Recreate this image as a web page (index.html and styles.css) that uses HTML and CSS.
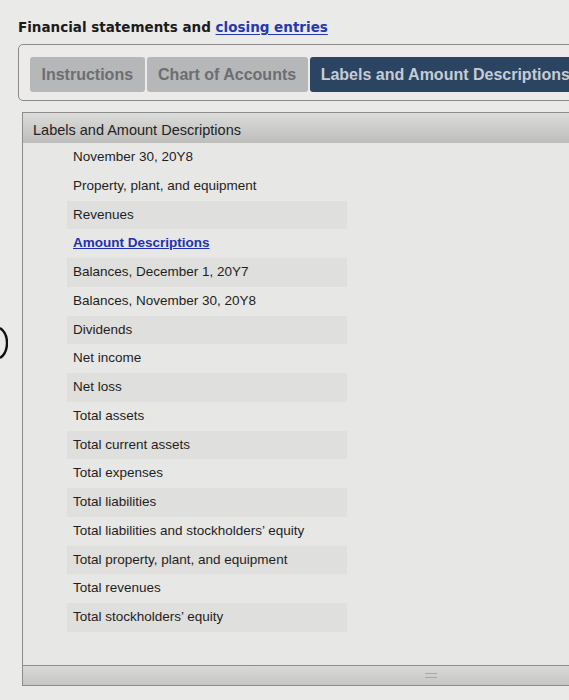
FILE: index.html
```html
<!DOCTYPE html>
<html>
<head>
<meta charset="utf-8">
<link rel="stylesheet" href="styles.css">
</head>
<body>
<div class="page">
  <h1 class="title">Financial statements and <a class="title-link" href="#">closing entries</a></h1>
  <div class="tabbar">
    <div class="tab">Instructions</div>
    <div class="tab">Chart of Accounts</div>
    <div class="tab tab-active">Labels and Amount Descriptions</div>
  </div>
  <div class="panel">
    <div class="panel-head">Labels and Amount Descriptions</div>
    <ul class="list">
      <li class="row">November 30, 20Y8</li>
      <li class="row">Property, plant, and equipment</li>
      <li class="row shade">Revenues</li>
      <li class="row"><a class="sub-link" href="#">Amount Descriptions</a></li>
      <li class="row shade">Balances, December 1, 20Y7</li>
      <li class="row">Balances, November 30, 20Y8</li>
      <li class="row shade">Dividends</li>
      <li class="row">Net income</li>
      <li class="row shade">Net loss</li>
      <li class="row">Total assets</li>
      <li class="row shade">Total current assets</li>
      <li class="row">Total expenses</li>
      <li class="row shade">Total liabilities</li>
      <li class="row">Total liabilities and stockholders’ equity</li>
      <li class="row shade">Total property, plant, and equipment</li>
      <li class="row">Total revenues</li>
      <li class="row shade">Total stockholders’ equity</li>
    </ul>
    <div class="panel-foot"><span class="grip"></span></div>
  </div>
  <svg class="edge-mark" width="8" height="34" viewBox="0 0 8 34"><path d="M0 2 C6 6 7 12 7 17 C7 22 6 28 0 32" fill="none" stroke="#111" stroke-width="2.4"/></svg>
</div>
</body>
</html>
```

FILE: styles.css
```css
html, body {
  margin: 0;
  padding: 0;
  overflow: hidden;
  background: #eaeae8;
}
.page {
  position: relative;
  width: 569px;
  height: 700px;
  overflow: hidden;
  padding-top: 18px;
  box-sizing: border-box;
}
.title {
  margin: 0 0 0 18px;
  font-family: "DejaVu Sans", Verdana, sans-serif;
  font-weight: bold;
  font-size: 13.5px;
  line-height: 18px;
  color: #1b1b1b;
  letter-spacing: 0;
}
.title-link {
  color: #2538b0;
  text-decoration: underline;
  text-underline-offset: 2px;
}
.tabbar {
  display: flex;
  gap: 2px;
  margin: 8px 0 0 18px;
  width: 580px;
  height: 57px;
  box-sizing: border-box;
  border: 1px solid #8a8a8a;
  border-radius: 5px;
  padding: 12px 0 0 11px;
  background: #ecebea;
}
.tab {
  height: 35px;
  line-height: 35px;
  padding: 0 11.5px;
  border-radius: 3px;
  background: #b6b7b9;
  color: #6c6e71;
  font-family: "Liberation Sans", Arial, sans-serif;
  font-weight: bold;
  font-size: 16px;
  white-space: nowrap;
}
.tab-active {
  background: #2a4461;
  color: #c6ccd4;
  padding-left: 11px;
}
.panel {
  margin: 11px 0 0 22px;
  width: 580px;
  height: 574px;
  box-sizing: border-box;
  border: 1px solid #8c8c8c;
  background: #e7e7e5;
  display: flex;
  flex-direction: column;
}
.panel-head {
  height: 30px;
  line-height: 34px;
  padding-left: 10px;
  background: linear-gradient(#dcdcda, #bdbdbb);
  font-family: "Liberation Sans", Arial, sans-serif;
  font-size: 14.5px;
  color: #222;
  flex: none;
}
.list {
  list-style: none;
  margin: 0;
  padding: 0 0 0 44px;
  flex: 1;
}
.row {
  width: 280px;
  height: 28.75px;
  line-height: 28.75px;
  padding-left: 6px;
  box-sizing: border-box;
  font-family: "Liberation Sans", Arial, sans-serif;
  font-size: 13.5px;
  color: #1e1e1e;
  white-space: nowrap;
}
.shade {
  background: #dfdfdd;
}
.sub-link {
  color: #1f32b0;
  font-weight: bold;
  text-decoration: underline;
}
.panel-foot {
  height: 19px;
  flex: none;
  border-top: 1px solid #8d8d8d;
  background: linear-gradient(#d8d8d6, #c6c6c4);
  position: relative;
}
.grip {
  position: absolute;
  left: 402px;
  top: 7px;
  width: 12px;
  height: 3px;
  border-top: 1px solid #a8a8a8;
  border-bottom: 1px solid #a8a8a8;
}
.edge-mark {
  position: absolute;
  left: 0;
  top: 326px;
}
```
